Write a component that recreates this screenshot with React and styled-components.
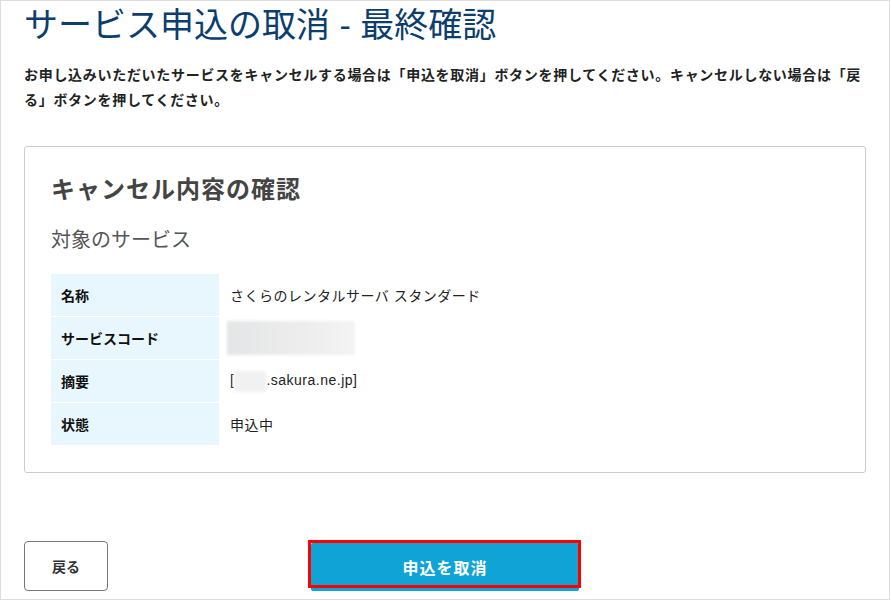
import React from "react";
import styled, { createGlobalStyle } from "styled-components";

const GlobalStyle = createGlobalStyle`
  html, body {
    margin: 0;
    padding: 0;
    background: #fff;
  }
  body {
    font-family: "Liberation Sans", "Noto Sans CJK JP", sans-serif;
    color: #222;
  }
`;

const Frame = styled.div`
  box-sizing: border-box;
  width: 890px;
  height: 600px;
  border: 1px solid #ddd;
  padding: 0 23px;
  overflow: hidden;
`;

const PageTitle = styled.h1`
  margin: 0;
  padding-top: 4px;
  font-size: 34px;
  line-height: 40px;
  font-weight: 400;
  color: #0b3d6e;
`;

const Lead = styled.p`
  margin: 18px 0 0;
  font-size: 14px;
  line-height: 25px;
  letter-spacing: 0.05em;
  font-weight: 700;
  color: #222;
`;

const Card = styled.section`
  margin-top: 33px;
  border: 1px solid #ccc;
  border-radius: 3px;
  padding: 26px 26px 26px;
`;

const CardTitle = styled.h2`
  margin: 0;
  font-size: 24px;
  line-height: 34px;
  font-weight: 700;
  letter-spacing: 1px;
  color: #444;
`;

const SubTitle = styled.h3`
  margin: 18px 0 0;
  font-size: 20px;
  line-height: 30px;
  font-weight: 400;
  color: #555;
`;

const Table = styled.table`
  margin-top: 19px;
  width: 100%;
  border-collapse: separate;
  border-spacing: 0;
`;

const Th = styled.th`
  box-sizing: border-box;
  width: 168px;
  height: 42px;
  padding: 0 10px;
  background: #e8f6fd;
  border-bottom: 1px solid #fff;
  text-align: left;
  font-size: 14px;
  font-weight: 700;
  color: #111;
`;

const Td = styled.td`
  height: 42px;
  padding: 0 11px;
  border-bottom: 1px solid #fff;
  font-size: 14px;
  letter-spacing: 0.5px;
  color: #222;
`;

const Masked = styled.span`
  display: inline-block;
  vertical-align: middle;
  width: ${(p) => p.w}px;
  height: ${(p) => p.h}px;
  margin-left: ${(p) => p.offset || 0}px;
  background: ${(p) =>
    p.light
      ? "#f1f1f1"
      : "linear-gradient(90deg, #e4e5e6 0%, #ededed 60%, #f3f3f3 100%)"};
  filter: blur(1.5px);
`;

const Actions = styled.div`
  display: grid;
  grid-template-columns: 1fr auto 1fr;
  align-items: start;
  margin-top: 68px;
`;

const BackButton = styled.button`
  justify-self: start;
  width: 84px;
  height: 50px;
  background: #fff;
  border: 1px solid #777;
  border-radius: 4px;
  font-family: inherit;
  font-size: 14px;
  font-weight: 700;
  color: #333;
`;

const CancelButton = styled.button`
  position: relative;
  width: 268px;
  height: 48px;
  margin-top: 2px;
  background: #0fa3d6;
  border: none;
  border-radius: 2px;
  font-family: inherit;
  font-size: 16px;
  letter-spacing: 1px;
  font-weight: 700;
  color: #fff;

  &::after {
    content: "";
    position: absolute;
    top: -3px;
    left: -3px;
    right: -2px;
    bottom: 3px;
    border: 3px solid #f00;
  }
`;

const rows = [
  { label: "名称", value: "さくらのレンタルサーバ スタンダード" },
  { label: "サービスコード", value: <Masked w={128} h={34} offset={-3} /> },
  {
    label: "摘要",
    value: (
      <>
        [<Masked light w={32} h={21} />.sakura.ne.jp]
      </>
    ),
  },
  { label: "状態", value: "申込中" },
];

export default function App() {
  return (
    <>
      <GlobalStyle />
      <Frame>
        <PageTitle>サービス申込の取消 - 最終確認</PageTitle>
        <Lead>
          お申し込みいただいたサービスをキャンセルする場合は「申込を取消」ボタンを押してください。キャンセルしない場合は「戻る」ボタンを押してください。
        </Lead>

        <Card>
          <CardTitle>キャンセル内容の確認</CardTitle>
          <SubTitle>対象のサービス</SubTitle>
          <Table>
            <tbody>
              {rows.map((row) => (
                <tr key={row.label}>
                  <Th>{row.label}</Th>
                  <Td>{row.value}</Td>
                </tr>
              ))}
            </tbody>
          </Table>
        </Card>

        <Actions>
          <BackButton>戻る</BackButton>
          <CancelButton>申込を取消</CancelButton>
        </Actions>
      </Frame>
    </>
  );
}
